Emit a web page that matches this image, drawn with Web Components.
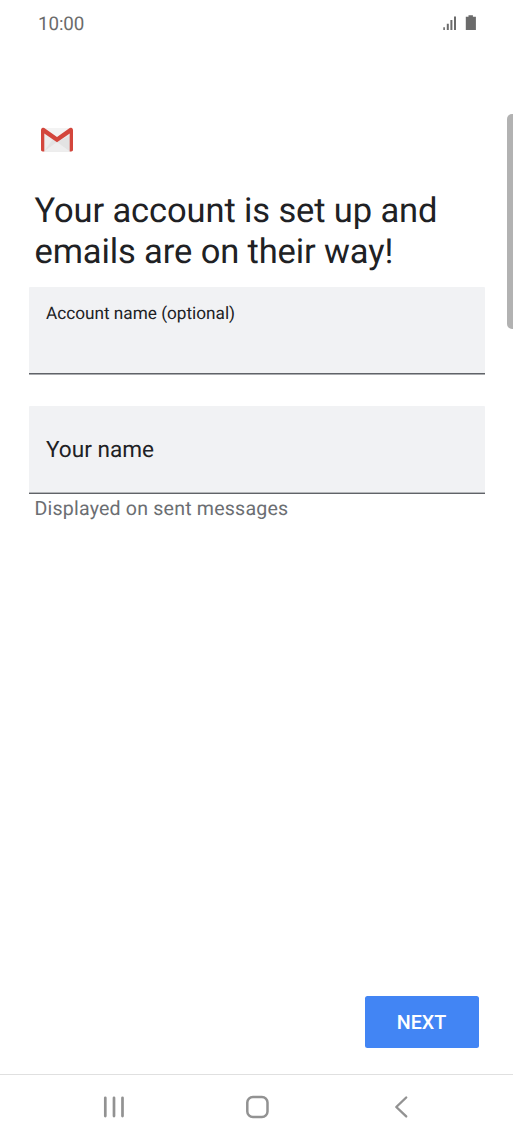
<!DOCTYPE html>
<html lang="en">
<head>
<meta charset="utf-8">
<title>Gmail account setup</title>
<style>
html,body{margin:0;height:100%;background:#fff;overflow:hidden}
body{font-family:Roboto,"Liberation Sans",sans-serif;text-rendering:geometricPrecision}
</style>
</head>
<body>
<setup-screen></setup-screen>
<script>
const define = (name, html) => customElements.define(name, class extends HTMLElement {
  constructor() {
    super();
    const t = document.createElement('template');
    t.innerHTML = html;
    this.attachShadow({ mode: 'open' }).append(t.content.cloneNode(true));
  }
});

define('status-bar', `<style>
:host{display:flex;justify-content:space-between;align-items:flex-start;height:48px;padding:0 36px 0 38px;box-sizing:border-box;color:#6b6b6b}
time{font-size:18.8px;line-height:24px;padding-top:12px;letter-spacing:-.1px}
svg{display:block;margin-top:14px}
</style>
<time><slot></slot></time>
<svg width="34" height="18" viewBox="443 14 34 18" fill="#6b6b6b"><path d="M443.3 27.2h1.6v2.8h-1.6zM446.8 23.7h2v6.3h-2zM450.4 20h2v10h-2zM454 16.5h2V30h-2z"/><path d="M468.5 15.2h4.4v1.5h3V30h-10.1V16.7h2.7z"/></svg>`);

define('gmail-logo', `<style>:host{display:block;width:34px;height:26px}svg{display:block}</style>
<svg width="34" height="26" viewBox="0 0 34 26"><path fill="#ececec" d="M3 1h28v23.5H3z"/><path fill="#e3e3e3" d="M4 24.5 13 12l4 3 14-7v16.5z"/><path fill="#eee" d="M4 24.5 17 15l13 9.5z"/><path fill="#f3f3f3" d="M4 1h26L17 11z"/><path fill="#d3463c" d="M1 3.2C1 1.3 2.3.8 3.5.8c.7 0 1 .2 1.5.6L17 10.1 29 1.4c.5-.4.8-.6 1.5-.6 1.2 0 2.5.5 2.5 2.4v19.6c0 1.1-.7 1.7-1.7 1.7h-1.6V6.4L17 15.2 4.3 6.4v18.1H2.7C1.7 24.5 1 23.9 1 22.8z"/></svg>`);

define('text-field', `<style>
:host{display:block}
.box{display:flex;align-items:center;height:88px;box-sizing:border-box;padding:0 17.5px;background:#f1f2f4;border-bottom:1px solid #606368;box-shadow:inset 0 -1px #b4b6b9;border-radius:1px 1px 0 0;color:#202124;font-size:22.6px;line-height:28px}
:host([floating]) .box{height:87px;align-items:flex-start;padding-top:14px;box-shadow:0 1px #a9abae;font-size:17.2px;line-height:26px}
::slotted([slot=helper]){display:block;padding:2px 6px 0;color:#6b6e72;font-size:19.6px;line-height:26px;letter-spacing:.19px}
</style><div class="box"><slot></slot></div><slot name="helper"></slot>`);

define('action-button', `<style>
:host{display:flex;align-items:center;justify-content:center;width:114px;height:52px;padding:2px 1px 0 0;box-sizing:border-box;border-radius:2.5px;background:#4285f4;color:#fff;font-size:19.7px;font-weight:500;line-height:24px}
</style><slot></slot>`);

define('scroll-thumb', `<style>:host{display:block;width:6.5px;height:215px;border-radius:5px 0 0 5px;background:#b2b2b2}</style>`);

define('nav-bar', `<style>
:host{display:block;height:68px;box-sizing:border-box;border-top:1px solid #e0e0e0}
div{display:grid;grid-template-columns:22px 24px 14px;justify-content:start;column-gap:120px;padding:20px 0 0 103px;align-items:center}
svg{display:block}
svg:last-child{margin-left:5px}
</style>
<div>
<svg width="22" height="24" viewBox="0 0 22 24" stroke="#929292" stroke-width="2.7" stroke-linecap="round"><path d="M2.3 2.8v18.3M11 2.8v18.3M19.5 2.8v18.3"/></svg>
<svg width="24" height="24" viewBox="0 0 24 24" fill="none" stroke="#929292" stroke-width="2.5"><rect x="2.3" y="1.9" width="20.2" height="20.2" rx="5.6"/></svg>
<svg width="14" height="24" viewBox="0 0 14 24" fill="none" stroke="#929292" stroke-width="2.4" stroke-linecap="round" stroke-linejoin="round"><path d="M12.2 2.5 2.3 12l9.9 9.4"/></svg>
</div>`);

define('setup-screen', `<style>
:host{display:flex;flex-direction:column;width:513px;height:1142px;position:relative;background:#fff}
main{flex:1;display:flex;flex-direction:column;padding:79px 28.5px 0}
gmail-logo{margin-left:11.5px}
h1{margin:38px 0 0 6px;color:#202124;font-weight:400;font-size:34.5px;line-height:40.5px;letter-spacing:-.12px;white-space:nowrap}
text-field+text-field{margin-top:32px}
h1+text-field{margin-top:15px}
footer{display:flex;justify-content:flex-end;padding:0 34px 26px}
scroll-thumb{position:absolute;right:0;top:114px}
</style>
<status-bar>10:00</status-bar>
<main><gmail-logo></gmail-logo>
<h1>Your account is set up and<br>emails are on their way!</h1>
<text-field floating>Account name (optional)</text-field>
<text-field>Your name<span slot="helper">Displayed on sent messages</span></text-field>
</main>
<footer><action-button>NEXT</action-button></footer>
<nav-bar></nav-bar>
<scroll-thumb></scroll-thumb>`);
</script>
</body>
</html>
